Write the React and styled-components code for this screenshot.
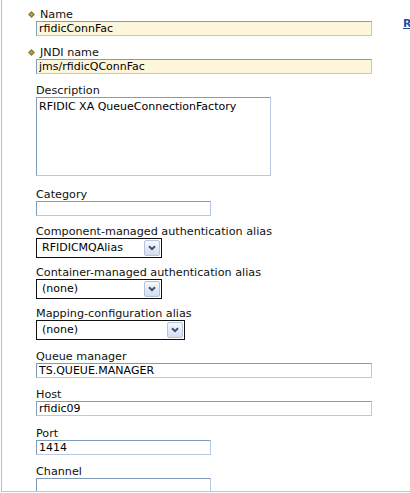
import React from "react";
import styled, { createGlobalStyle } from "styled-components";

const GlobalStyle = createGlobalStyle`
  html, body { margin: 0; padding: 0; background: #ffffff; }
  body {
    font-family: "DejaVu Sans", Verdana, "Liberation Sans", sans-serif;
    font-size: 11px;
    color: #000;
    overflow: hidden;
  }
`;

const Page = styled.div`
  margin-left: 1px;
  height: 491px;
  border-left: 1px solid #a9c1e2;
  border-bottom: 1px solid #c4c4c4;
  display: flex;
  overflow: hidden;
`;

const FormColumn = styled.div`
  padding: 7px 0 0 34px;
  width: 336px;
  flex: none;
`;

const SideColumn = styled.div`
  padding: 17px 0 0 31px;
  flex: none;
`;

const SideLink = styled.a`
  font-weight: bold;
  color: #1f4ea1;
  text-decoration: underline;
  font-size: 11px;
  line-height: 14px;
  cursor: pointer;
`;

const Field = styled.div`
  margin-bottom: ${(p) => p.$gap}px;
`;

const Label = styled.label`
  display: flex;
  align-items: flex-start;
  height: 14px;
  line-height: 16px;
  font-size: 11.2px;
  white-space: nowrap;
  color: #111;
  margin-left: ${(p) => (p.$required ? -8 : 0)}px;
`;

const LabelText = styled.span`
  display: block;
  height: 14px;
  line-height: 16px;
`;

const Bullet = styled.span`
  display: inline-flex;
  width: 12px;
  height: 14px;
  padding-top: 4px;
  box-sizing: border-box;
  flex: none;
`;

const TextInput = styled.input`
  display: block;
  box-sizing: border-box;
  width: ${(p) => p.$w}px;
  height: 15px;
  margin: 0;
  padding: 0 2px;
  border-style: solid;
  border-width: 1px;
  border-color: #7f9db9 #b7cae3 #b7cae3 #7f9db9;
  background: ${(p) => (p.$required ? "#fef6da" : "#ffffff")};
  font-family: "DejaVu Sans", Verdana, sans-serif;
  font-size: 11px;
  line-height: 13px;
  color: #000;
  outline: none;
`;

const TextArea = styled.textarea`
  display: block;
  box-sizing: border-box;
  width: ${(p) => p.$w}px;
  height: 79px;
  margin: 0;
  padding: 2px 2px;
  border-style: solid;
  border-width: 1px;
  border-color: #7f9db9 #b7cae3 #b7cae3 #7f9db9;
  background: #fff;
  font-family: "DejaVu Sans", Verdana, sans-serif;
  font-size: 11px;
  line-height: 13px;
  color: #000;
  resize: none;
  overflow: hidden;
  outline: none;
`;

const Select = styled.div`
  box-sizing: border-box;
  width: ${(p) => p.$w}px;
  height: 20px;
  border: 1px solid #111;
  background: #fff;
  display: flex;
  align-items: center;
  justify-content: space-between;
  padding-left: 5px;
  padding-right: 1px;
`;

const SelectText = styled.span`
  font-size: 11px;
  line-height: 14px;
  white-space: nowrap;
`;

const ArrowButton = styled.span`
  box-sizing: border-box;
  width: 16px;
  height: 16px;
  border: 1px solid #b4c4de;
  border-radius: 2px;
  background: linear-gradient(#f6f8fc, #d3ddef);
  display: flex;
  align-items: center;
  justify-content: center;
`;

const Diamond = () => (
  <svg width="7" height="7" viewBox="0 0 7 7">
    <polygon points="3.5,0 7,3.5 3.5,7 0,3.5" fill="#8d7c35" />
    <polygon points="3.5,2 5,3.5 3.5,5 2,3.5" fill="#b8a862" />
  </svg>
);

const Chevron = () => (
  <svg width="8" height="6" viewBox="0 0 8 6">
    <path d="M1 1.2 L4 4.2 L7 1.2" fill="none" stroke="#3d4f78" strokeWidth="2" />
  </svg>
);

const FieldLabel = ({ required, children }) => (
  <Label $required={required}>
    {required && (
      <Bullet>
        <Diamond />
      </Bullet>
    )}
    <LabelText>{children}</LabelText>
  </Label>
);

const InputField = ({ label, value, w, required, gap = 9 }) => (
  <Field $gap={gap}>
    <FieldLabel required={required}>{label}</FieldLabel>
    <TextInput $w={w} $required={required} defaultValue={value} readOnly />
  </Field>
);

const SelectField = ({ label, value, w, gap = 7 }) => (
  <Field $gap={gap}>
    <FieldLabel>{label}</FieldLabel>
    <Select $w={w}>
      <SelectText>{value}</SelectText>
      <ArrowButton>
        <Chevron />
      </ArrowButton>
    </Select>
  </Field>
);

export default function App() {
  return (
    <>
      <GlobalStyle />
      <Page>
        <FormColumn>
          <InputField label="Name" value="rfidicConnFac" w={336} required />
          <InputField label="JNDI name" value="jms/rfidicQConnFac" w={336} required />
          <Field $gap={11}>
            <FieldLabel>Description</FieldLabel>
            <TextArea $w={235} defaultValue="RFIDIC XA QueueConnectionFactory" readOnly />
          </Field>
          <InputField label="Category" value="" w={175} gap={8} />
          <SelectField label="Component-managed authentication alias" value="RFIDICMQAlias" w={126} />
          <SelectField label="Container-managed authentication alias" value="(none)" w={126} />
          <SelectField label="Mapping-configuration alias" value="(none)" w={149} gap={9} />
          <InputField label="Queue manager" value="TS.QUEUE.MANAGER" w={336} />
          <InputField label="Host" value="rfidic09" w={336} gap={10} />
          <InputField label="Port" value="1414" w={175} />
          <InputField label="Channel" value="" w={175} />
        </FormColumn>
        <SideColumn>
          <SideLink>R</SideLink>
        </SideColumn>
      </Page>
    </>
  );
}
